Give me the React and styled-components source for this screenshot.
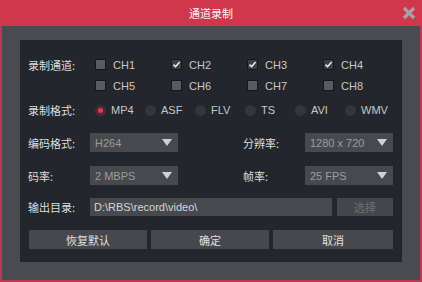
import styled, { createGlobalStyle } from 'styled-components';

const Global = createGlobalStyle`
  html, body { margin: 0; padding: 0; background: #4a4b50; }
  body { font-family: "Liberation Sans", "Noto Sans CJK SC", Arial, sans-serif; }
`

const Window = styled.div`
  width: 422px;
  height: 282px;
  box-sizing: border-box;
  background: #4a4b50;
  border: 2px solid #b63a52;
  border-top: none;
  display: flex;
  flex-direction: column;
`

const TitleBar = styled.div`
  height: 26px;
  margin: 0 -2px;
  background: #d0374c;
  position: relative;
  display: flex;
  align-items: center;
  justify-content: center;
  color: #f4f4f4;
  font-size: 11px;
  font-family: "Noto Sans CJK SC", sans-serif;
`

const Close = styled.div`
  position: absolute;
  right: 6px;
  top: 6px;
  width: 14px;
  height: 14px;
`

const Body = styled.div`
  flex: 1;
  padding: 14px 18px 16px 18px;
`

const Panel = styled.div`
  background: #23262c;
  padding: 14px 9px 13px 8px;
  display: flex;
  flex-direction: column;
`

const Row = styled.div`
  display: flex;
  align-items: center;
  height: ${p => p.h || 21}px;
  margin-top: ${p => p.mt || 0}px;
`

const Label = styled.div`
  width: 62px;
  flex: none;
  color: #dedede;
  font-size: 11px;
  font-family: "Noto Sans CJK SC", sans-serif;
  white-space: nowrap;
`

const Grid = styled.div`
  display: grid;
  grid-template-columns: repeat(${p => p.cols}, ${p => p.w}px);
  padding-left: 5px;
`

const Opt = styled.div`
  display: flex;
  align-items: center;
  gap: ${p => p.gap || 7}px;
  color: #c8c8c8;
  font-size: 11px;
`

const Box = styled.div`
  width: 11px;
  height: 11px;
  box-sizing: border-box;
  border: 1px solid #15171a;
  background: ${p => p.on ? '#3d3f44' : '#5a5b5f'};
  display: flex;
  align-items: center;
  justify-content: center;
`

const Radio = styled.div`
  width: 11px;
  height: 11px;
  border-radius: 50%;
  background: ${p => p.on ? '#4a2a33' : '#33363c'};
  display: flex;
  align-items: center;
  justify-content: center;
  &::after {
    content: '';
    width: 5px;
    height: 5px;
    border-radius: 50%;
    background: ${p => p.on ? '#e43a52' : 'transparent'};
  }
`

const Select = styled.div`
  width: 88px;
  height: 19px;
  box-sizing: border-box;
  background: #48494e;
  display: flex;
  align-items: center;
  justify-content: space-between;
  padding: 0 6px 0 5px;
  color: #9c9c9c;
  font-size: 11px;
  flex: none;
`

const Arrow = styled.div`
  width: 0;
  height: 0;
  border-left: 5px solid transparent;
  border-right: 5px solid transparent;
  border-top: 7px solid #d0d0d0;
`

const Spacer = styled.div`
  width: ${p => p.w}px;
  flex: none;
`

const Input = styled.div`
  width: 242px;
  height: 18px;
  box-sizing: border-box;
  background: #48494e;
  color: #d6d6d6;
  font-size: 11px;
  padding-left: 4px;
  display: flex;
  align-items: center;
`

const SmallBtn = styled.div`
  width: 56px;
  height: 18px;
  margin-left: 5px;
  background: #45464b;
  color: #6e6f73;
  font-size: 11px;
  font-family: "Noto Sans CJK SC", sans-serif;
  display: flex;
  align-items: center;
  justify-content: center;
`

const Buttons = styled.div`
  display: grid;
  grid-template-columns: 118px 118px 120px;
  gap: 4px;
  margin-top: 14px;
  padding-left: 1px;
`

const Button = styled.div`
  height: 19px;
  background: #47484d;
  color: #e0e0e0;
  font-size: 11px;
  font-family: "Noto Sans CJK SC", sans-serif;
  display: flex;
  align-items: center;
  justify-content: center;
`

const Check = () => (
  <svg width="9" height="9" viewBox="0 0 9 9">
    <path d="M1.5 4.6 L3.6 6.7 L7.6 2" stroke="#f2f2f2" strokeWidth="1.5" fill="none" />
  </svg>
)

const channels = [
  [['CH1', false], ['CH2', true], ['CH3', true], ['CH4', true]],
  [['CH5', false], ['CH6', false], ['CH7', false], ['CH8', false]],
]

const formats = ['MP4', 'ASF', 'FLV', 'TS', 'AVI', 'WMV']

const App = () => {
  return (
    <>
      <Global />
      <Window>
        <TitleBar>
          通道录制
          <Close>
            <svg width="14" height="14" viewBox="0 0 14 14">
              <path d="M2 2 L12 12 M12 2 L2 12" stroke="#a3a3a6" strokeWidth="3.2" strokeLinecap="butt" />
            </svg>
          </Close>
        </TitleBar>
        <Body>
          <Panel>
            {channels.map((line, i) => (
              <Row key={i}>
                <Label>{i === 0 ? '录制通道:' : ''}</Label>
                <Grid cols={4} w={76}>
                  {line.map(([name, on]) => (
                    <Opt key={name}>
                      <Box on={on}>{on && <Check />}</Box>
                      {name}
                    </Opt>
                  ))}
                </Grid>
              </Row>
            ))}
            <Row h={22} mt={3}>
              <Label>录制格式:</Label>
              <Grid cols={6} w={50}>
                {formats.map((f, i) => (
                  <Opt key={f} gap={5}>
                    <Radio on={i === 0} />
                    {f}
                  </Opt>
                ))}
              </Grid>
            </Row>
            <Row h={19} mt={12}>
              <Label>编码格式:</Label>
              <Select>H264<Arrow /></Select>
              <Spacer w={65} />
              <Label>分辨率:</Label>
              <Select>1280 x 720<Arrow /></Select>
            </Row>
            <Row h={19} mt={14}>
              <Label>码率:</Label>
              <Select>2 MBPS<Arrow /></Select>
              <Spacer w={65} />
              <Label>帧率:</Label>
              <Select>25 FPS<Arrow /></Select>
            </Row>
            <Row h={18} mt={13}>
              <Label>输出目录:</Label>
              <Input>D:\RBS\record\video\</Input>
              <SmallBtn>选择</SmallBtn>
            </Row>
            <Buttons>
              <Button>恢复默认</Button>
              <Button>确定</Button>
              <Button>取消</Button>
            </Buttons>
          </Panel>
        </Body>
      </Window>
    </>
  )
}

export default App
